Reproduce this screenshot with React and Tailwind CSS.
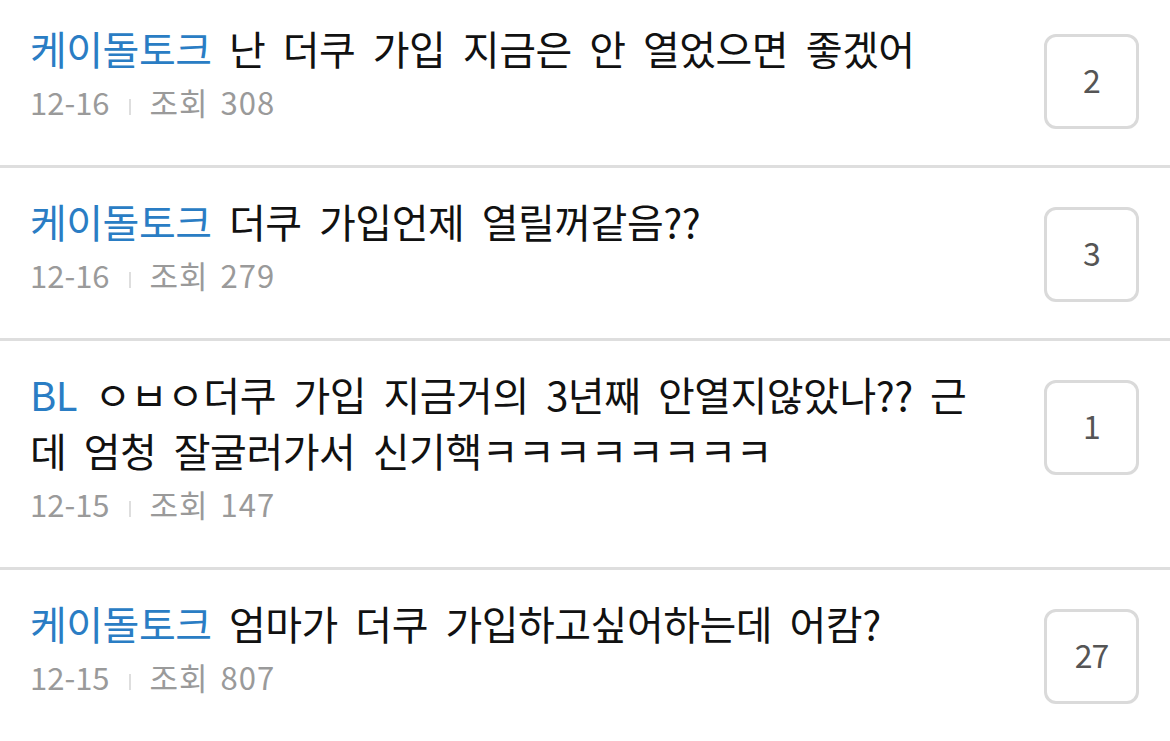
import React from 'react';

const posts = [
    { tag: '케이돌토크', lines: ['난 더쿠 가입 지금은 안 열었으면 좋겠어'], date: '12-16', views: 308, comments: 2 },
    { tag: '케이돌토크', lines: ['더쿠 가입언제 열릴꺼같음??'], date: '12-16', views: 279, comments: 3 },
    {
        tag: 'BL',
        lines: ['ㅇㅂㅇ더쿠 가입 지금거의 3년째 안열지않았나?? 근', '데 엄청 잘굴러가서 신기핵ㅋㅋㅋㅋㅋㅋㅋㅋ'],
        date: '12-15',
        views: 147,
        comments: 1,
    },
    { tag: '케이돌토크', lines: ['엄마가 더쿠 가입하고싶어하는데 어캄?'], date: '12-15', views: 807, comments: 27 },
];

const font = { fontFamily: '"Noto Sans CJK KR", "Noto Sans", sans-serif' };

const PostRow = ({ post }) => (
    <div className="flex items-start justify-between pl-[30px] pr-[31px] pt-[25px] pb-[35px]">
        <div className="flex-1 min-w-0 pb-[8px]">
            <div className="text-[40px] leading-[56px] tracking-[-0.5px] text-[#111] whitespace-nowrap [word-spacing:9px]">
                {post.lines.map((line, i) => (
                    <div key={i} className="h-[56px]">
                        {i === 0 && <span className="text-[#2a7dc4]">{post.tag} </span>}
                        {line}
                    </div>
                ))}
            </div>
            <div className="mt-[6px] h-[40px] flex items-center text-[31px] leading-[40px] text-[#9a9a9a]">
                <span>{post.date}</span>
                <span className="inline-block w-[2px] h-[16px] bg-[#dedede] mx-[19px] mt-[10px]" />
                <span className="tracking-[1px] [word-spacing:4px]">조회 {post.views}</span>
            </div>
        </div>
        <div className="mt-[14px] w-[95px] h-[95px] shrink-0 rounded-[12px] border-[3px] border-[#dadada] flex items-center justify-center pb-[6px] text-[32px] text-[#555] tracking-[-1px]">
            {post.comments}
        </div>
    </div>
);

export default function App() {
    return (
        <div className="w-[1170px] h-[741px] overflow-hidden bg-white" style={font}>
            <div className="-mt-[5px]">
                {posts.map((post, idx) => (
                    <div key={idx} className={idx > 0 ? 'border-t-[3px] border-[#dedede]' : ''}>
                        <PostRow post={post} />
                    </div>
                ))}
            </div>
        </div>
    );
}
